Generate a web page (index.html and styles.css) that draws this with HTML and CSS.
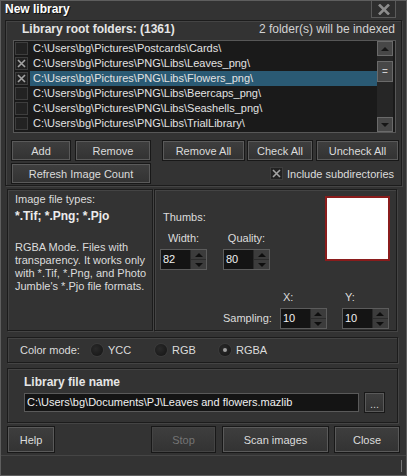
FILE: index.html
```html
<!DOCTYPE html>
<html lang="en">
<head>
  <meta charset="UTF-8">
  <title>New library</title>
  <link rel="stylesheet" href="styles.css">
</head>
<body>
  <div class="window">

    <div class="titlebar">
      <span class="title">New library</span>
      <button class="close-btn">
        <svg width="12" height="11" viewBox="0 0 12 11"><path d="M1 0.5 L11 10.5 M11 0.5 L1 10.5" stroke="#8c8c8c" stroke-width="2.6"/></svg>
      </button>
    </div>

    <!-- Folder list -->
    <div class="group folders">
      <div class="folders-head">
        <span class="heading">Library root folders: (1361)</span>
        <span>2 folder(s) will be indexed</span>
      </div>
      <div class="list">
        <div class="rows">
          <div class="row"><span class="check"></span><span class="path">C:\Users\bg\Pictures\Postcards\Cards\</span></div>
          <div class="row"><span class="check"><svg width="11" height="11" viewBox="0 0 11 11"><path d="M2 2 L9 9 M9 2 L2 9" stroke="#a4a4a4" stroke-width="1.6"/></svg></span><span class="path">C:\Users\bg\Pictures\PNG\Libs\Leaves_png\</span></div>
          <div class="row"><span class="check"><svg width="11" height="11" viewBox="0 0 11 11"><path d="M2 2 L9 9 M9 2 L2 9" stroke="#a4a4a4" stroke-width="1.6"/></svg></span><span class="path selected">C:\Users\bg\Pictures\PNG\Libs\Flowers_png\</span></div>
          <div class="row"><span class="check"></span><span class="path">C:\Users\bg\Pictures\PNG\Libs\Beercaps_png\</span></div>
          <div class="row"><span class="check"></span><span class="path">C:\Users\bg\Pictures\PNG\Libs\Seashells_png\</span></div>
          <div class="row"><span class="check"></span><span class="path">C:\Users\bg\Pictures\PNG\Libs\TrialLibrary\</span></div>
          <div class="row"><span class="check"></span><span class="path"></span></div>
        </div>
        <div class="scrollbar">
          <div class="sb-btn"><span class="arrow-up"></span></div>
          <div class="sb-thumb">=</div>
          <div class="sb-track"></div>
          <div class="sb-btn"><span class="arrow-down"></span></div>
        </div>
      </div>
      <div class="btn-row">
        <button class="btn w-add">Add</button>
        <button class="btn w-remove">Remove</button>
        <button class="btn w-remove-all">Remove All</button>
        <button class="btn w-check-all">Check All</button>
        <button class="btn w-uncheck-all">Uncheck All</button>
      </div>
      <div class="btn-row second">
        <button class="btn w-refresh">Refresh Image Count</button>
        <label class="subdirs"><span class="check"><svg width="11" height="11" viewBox="0 0 11 11"><path d="M2 2 L9 9 M9 2 L2 9" stroke="#a4a4a4" stroke-width="1.6"/></svg></span>Include subdirectories</label>
      </div>
    </div>

    <!-- Type info and thumbnail settings -->
    <div class="middle">
      <div class="panel info">
        <div class="info-label">Image file types:</div>
        <div class="info-types">*.Tif; *.Png; *.Pjo</div>
        <p class="info-text">RGBA Mode. Files with transparency. It works only with *.Tif, *.Png, and Photo Jumble's *.Pjo file formats.</p>
      </div>
      <div class="panel thumbs">
        <div class="thumbs-top">
          <div class="thumbs-fields">
            <div class="thumbs-label">Thumbs:</div>
            <div class="field-row">
              <div class="field">
                <div class="field-label">Width:</div>
                <div class="spin"><span class="spin-value">82</span><span class="spin-btns"><span class="spin-up"></span><span class="spin-down"></span></span></div>
              </div>
              <div class="field quality">
                <div class="field-label">Quality:</div>
                <div class="spin"><span class="spin-value">80</span><span class="spin-btns"><span class="spin-up"></span><span class="spin-down"></span></span></div>
              </div>
            </div>
          </div>
          <div class="preview"></div>
        </div>
        <div class="sampling">
          <span class="sampling-label">Sampling:</span>
          <div class="field left">
            <div class="field-label">X:</div>
            <div class="spin"><span class="spin-value">10</span><span class="spin-btns"><span class="spin-up"></span><span class="spin-down"></span></span></div>
          </div>
          <div class="field left y">
            <div class="field-label">Y:</div>
            <div class="spin"><span class="spin-value">10</span><span class="spin-btns"><span class="spin-up"></span><span class="spin-down"></span></span></div>
          </div>
        </div>
      </div>
    </div>

    <div class="panel color-mode">
      <span class="cm-label">Color mode:</span>
      <label class="radio"><span class="dot"></span>YCC</label>
      <label class="radio"><span class="dot"></span>RGB</label>
      <label class="radio"><span class="dot on"></span>RGBA</label>
    </div>

    <div class="panel libfile">
      <div class="heading">Library file name</div>
      <div class="file-row">
        <div class="file-input">C:\Users\bg\Documents\PJ\Leaves and flowers.mazlib</div>
        <button class="btn browse">...</button>
      </div>
    </div>

    <div class="footer">
      <button class="btn w-help">Help</button>
      <button class="btn w-stop" disabled>Stop</button>
      <button class="btn w-scan">Scan images</button>
      <button class="btn w-close">Close</button>
    </div>

    <div class="statusbar"><span class="grip"></span></div>
  </div>
</body>
</html>
```

FILE: styles.css
```css
body {
  margin: 0;
  background-color: #333;
}

.window {
  width: 407px;
  height: 476px;
  box-sizing: border-box;
  border: 1px solid #5e5e5e;
  background-color: #333;
  color: #dcdcdc;
  font-family: "Liberation Sans", Arial, sans-serif;
  font-size: 11px;
  overflow: hidden;
}

button {
  font-family: inherit;
  font-size: 11px;
  color: #dcdcdc;
  padding: 0;
}

.heading {
  font-weight: bold;
  font-size: 12px;
  line-height: 14px;
  color: #e6e6e6;
}

/* title bar */
.titlebar {
  height: 19px;
  display: flex;
  justify-content: space-between;
  align-items: flex-start;
}

.title {
  font-weight: bold;
  font-size: 12px;
  line-height: 17px;
  padding-left: 4px;
  color: #fff;
  text-shadow: 1px 1px 0 #111;
}

.close-btn {
  width: 25px;
  height: 18px;
  margin-top: -1px;
  margin-right: 10px;
  border: 1px solid #5a5a5a;
  background-color: #2e2e2e;
  display: flex;
  align-items: center;
  justify-content: center;
}

/* group boxes */
.group,
.panel {
  border: 1px solid #1c1c1c;
  box-shadow: inset 1px 1px 0 #444, 1px 1px 0 #444;
  box-sizing: border-box;
}

.folders {
  margin: 0 4px 0 4px;
  height: 166px;
}

.folders-head {
  display: flex;
  justify-content: space-between;
  align-items: center;
  height: 16px;
  padding: 0 6px 0 16px;
  font-size: 12px;
  color: #d2d2d2;
}

/* folder list */
.list {
  display: flex;
  margin: 3px 5px 0 7px;
  height: 93px;
  box-sizing: border-box;
  border: 1px solid #575757;
  background-color: #1a1a1a;
  overflow: hidden;
}

.rows {
  flex: 1;
}

.row {
  display: flex;
  height: 15px;
  align-items: center;
}

.check {
  width: 13px;
  height: 13px;
  box-sizing: border-box;
  border: 1px solid #3e3e3e;
  background-color: #222;
  margin: 0 2px 0 1px;
  flex: none;
  display: flex;
  align-items: center;
  justify-content: center;
}

.path {
  flex: 1;
  height: 15px;
  line-height: 15px;
  padding-left: 3px;
  white-space: nowrap;
  color: #e2e2e2;
}

.path.selected {
  background-color: #2a5a74;
}

.scrollbar {
  width: 16px;
  margin-right: 2px;
  display: flex;
  flex-direction: column;
  background-color: #262626;
}

.sb-btn,
.sb-thumb {
  height: 15px;
  box-sizing: border-box;
  border: 1px solid #6a6a6a;
  background-color: #474747;
  display: flex;
  align-items: center;
  justify-content: center;
}

.sb-thumb {
  height: 21px;
  margin-top: 5px;
  color: #cfcfcf;
  font-size: 10px;
  line-height: 10px;
}

.sb-track {
  flex: 1;
}

.arrow-up,
.arrow-down {
  width: 0;
  height: 0;
  border-left: 4px solid transparent;
  border-right: 4px solid transparent;
}

.arrow-up {
  border-bottom: 4px solid #161616;
}

.arrow-down {
  border-top: 4px solid #161616;
}

/* buttons */
.btn {
  height: 19px;
  box-sizing: border-box;
  border: 1px solid #5a5a5a;
  box-shadow: 0 0 0 1px #181818;
  background: linear-gradient(#3e3e3e, #333);
  cursor: pointer;
}

.btn:disabled {
  color: #747474;
  border-color: #444;
  cursor: default;
}

.btn-row {
  display: flex;
  align-items: center;
  margin: 8px 0 0 6px;
  height: 19px;
}

.btn-row.second {
  margin-top: 4px;
}

.w-add { width: 58px; }
.w-remove { width: 74px; margin-left: 6px; }
.w-remove-all { width: 81px; margin-left: 13px; }
.w-check-all { width: 64px; margin-left: 4px; }
.w-uncheck-all { width: 81px; margin-left: 5px; }
.w-refresh { width: 138px; }

.subdirs {
  display: flex;
  align-items: center;
  margin-left: 120px;
}

.subdirs .check {
  margin: 0 4px 0 0;
}

/* middle area */
.middle {
  display: flex;
  margin: 3px 0 0 6px;
  height: 142px;
}

.info {
  width: 146px;
  padding: 3px 0 0 7px;
  line-height: 13px;
}

.info-types {
  margin-top: 3px;
  font-weight: bold;
  font-size: 12px;
  line-height: 14px;
  color: #ececec;
}

.info-text {
  margin: 18px 0 0;
  padding-right: 4px;
  line-height: 13px;
}

.thumbs {
  width: 243px;
  margin-left: 1px;
}

.thumbs-top {
  display: flex;
  justify-content: space-between;
}

.thumbs-label {
  margin: 21px 0 0 8px;
  line-height: 13px;
}

.field-row {
  display: flex;
  margin: 8px 0 0 5px;
}

.field {
  display: flex;
  flex-direction: column;
  align-items: center;
}

.field.quality {
  margin-left: 16px;
}

.field-label {
  line-height: 13px;
  margin-bottom: 4px;
}

.field.left {
  align-items: flex-start;
  margin-left: 8px;
}

.field.left .field-label {
  padding-left: 3px;
}

.field.y {
  margin-left: 15px;
}

.spin {
  display: flex;
  width: 47px;
  height: 21px;
  box-sizing: border-box;
  border: 1px solid #5c5c5c;
  background-color: #141414;
}

.spin-value {
  flex: 1;
  line-height: 19px;
  padding-left: 2px;
  font-size: 11px;
  color: #f0f0f0;
}

.spin-btns {
  width: 15px;
  display: flex;
  flex-direction: column;
  background-color: #3c3c3c;
  border-left: 1px solid #2a2a2a;
}

.spin-up,
.spin-down {
  flex: 1;
  display: flex;
  align-items: center;
  justify-content: center;
}

.spin-up {
  border-bottom: 1px solid #2c2c2c;
}

.spin-up::after,
.spin-down::after {
  content: "";
  border-left: 4px solid transparent;
  border-right: 4px solid transparent;
}

.spin-up::after {
  border-bottom: 4px solid #0e0e0e;
}

.spin-down::after {
  border-top: 4px solid #0e0e0e;
}

.preview {
  width: 65px;
  height: 65px;
  box-sizing: border-box;
  margin: 6px 6px 0 0;
  border: 2px solid #8a1c1c;
  background-color: #fff;
}

.sampling {
  display: flex;
  align-items: flex-end;
  margin: 21px 0 0 68px;
}

.sampling-label {
  line-height: 21px;
}

/* color mode */
.color-mode {
  display: flex;
  align-items: center;
  margin: 6px 0 0 6px;
  width: 391px;
  height: 26px;
  padding-left: 12px;
}

.cm-label {
  width: 71px;
}

.radio {
  display: flex;
  align-items: center;
  width: 64px;
}

.dot {
  width: 12px;
  height: 12px;
  border-radius: 50%;
  background: radial-gradient(circle at 40% 40%, #2a2a2a, #141414);
  box-shadow: 0 0 0 1px #3a3a3a;
  margin-right: 5px;
  display: flex;
  align-items: center;
  justify-content: center;
}

.dot.on::after {
  content: "";
  width: 4px;
  height: 4px;
  border-radius: 50%;
  background-color: #a0a0a0;
}

/* library file */
.libfile {
  margin: 5px 0 0 6px;
  width: 391px;
  height: 55px;
  padding: 6px 0 0 16px;
}

.file-row {
  display: flex;
  margin-top: 4px;
}

.file-input {
  width: 335px;
  height: 19px;
  box-sizing: border-box;
  border: 1px solid #5a5a5a;
  background-color: #141414;
  line-height: 17px;
  padding-left: 2px;
  color: #f0f0f0;
  white-space: nowrap;
}

.btn.browse {
  width: 19px;
  margin-left: 6px;
  line-height: 20px;
  color: #cfcfcf;
}

/* bottom buttons */
.footer {
  display: flex;
  margin: 4px 7px 0 7px;
}

.footer .btn {
  height: 25px;
}

.w-help { width: 46px; }
.w-stop { width: 63px; margin-left: auto; }
.w-scan { width: 105px; margin-left: 8px; }
.w-close { width: 64px; margin-left: 7px; }

.statusbar {
  height: 20px;
  margin-top: 3px;
  border-top: 1px solid #454545;
  box-sizing: border-box;
  display: flex;
  justify-content: flex-end;
  align-items: center;
}

.grip {
  width: 1px;
  height: 12px;
  margin-right: 4px;
  background-color: #777;
}
```
